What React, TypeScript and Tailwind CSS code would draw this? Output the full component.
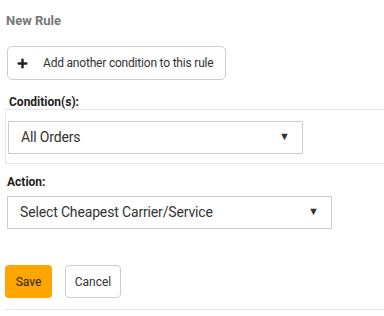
import { Plus } from "lucide-react";

function Select({ value, width }: { value: string; width: string }) {
  return (
    <div className={`${width} h-[33px] flex items-center justify-between border border-[#cccccc] bg-white pl-[12px] pr-[12px]`}>
      <span className="text-[14px] tracking-[-0.15px] text-[#333333]">{value}</span>
      <span className="text-[11px] text-[#333333]">▼</span>
    </div>
  );
}

export default function App() {
  return (
    <div className="w-[384px] h-[316px] overflow-hidden bg-white font-['Roboto',sans-serif]">
      <div className="pl-[6px] pt-[12px]">
        <h2 className="text-[13px] font-bold text-[#777777] leading-[18px]">New Rule</h2>
      </div>

      <div className="pl-[7px] mt-[16px]">
        <button className="h-[34px] w-[219px] flex items-center gap-[14px] pl-[8px] rounded-[5px] border border-[#cccccc] bg-white">
          <Plus className="h-[13px] w-[13px] text-[#222222]" strokeWidth={4.5} />
          <span className="text-[12px] tracking-[-0.2px] text-[#333333]">Add another condition to this rule</span>
        </button>
      </div>

      <div className="mt-[15px] pl-[9px] text-[12px] font-bold text-[#222222] leading-[14px]">Condition(s):</div>
      <div className="ml-[5px] border-y border-l border-[#e6e6e6] pl-[2px] pt-[11px] pb-[9px]">
        <Select value="All Orders" width="w-[295px]" />
      </div>

      <div className="mt-[11px] pl-[7px] text-[12px] font-bold text-[#222222] leading-[14px]">Action:</div>
      <div className="pl-[7px] mt-[7px]">
        <Select value="Select Cheapest Carrier/Service" width="w-[325px]" />
      </div>

      <div className="flex gap-[13px] pl-[5px] mt-[36px]">
        <button className="h-[33px] w-[47px] rounded-[4px] bg-[#ffa500] text-[12px] text-[#222222]">Save</button>
        <button className="h-[33px] w-[56px] rounded-[4px] border border-[#cccccc] bg-white text-[12px] text-[#333333]">Cancel</button>
      </div>
      <div className="ml-[5px] mt-[11px] border-t border-[#e6e6e6]" />
    </div>
  );
}
